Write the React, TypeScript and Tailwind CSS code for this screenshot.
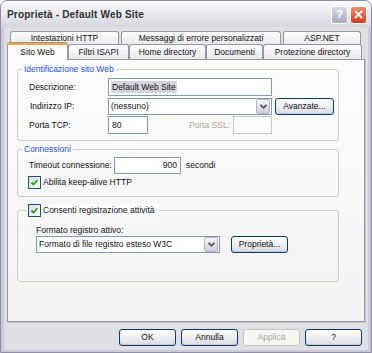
import React from "react";

const font = { fontFamily: "'Liberation Sans', Arial, sans-serif" };

function Tab({ label, w, h = "h-[15px]" }: { label: string; w: string; h?: string }) {
  return (
    <div
      className={`${w} ${h} shrink-0 flex items-center justify-center rounded-t-[3px] border border-b-0 border-[#919b9c] bg-gradient-to-b from-[#ffffff] to-[#e8e8ee] text-[8.5px] text-[#111]`}
    >
      {label}
    </div>
  );
}

function XpButton({ label, w = "w-[57px]", disabled = false }: { label: string; w?: string; disabled?: boolean }) {
  return (
    <div
      className={`${w} h-[17px] shrink-0 flex items-center justify-center rounded-[3px] border text-[8.5px] ${
        disabled
          ? "border-[#c9c7ba] bg-[#f5f5f3] text-[#aca899]"
          : "border-[#003c74] bg-gradient-to-b from-[#ffffff] to-[#dcdce4] text-[#111] shadow-[inset_0_-1px_0_#c6c5d7]"
      }`}
    >
      {label}
    </div>
  );
}

function Checkbox() {
  return (
    <div className="w-[13px] h-[13px] shrink-0 border border-[#1c5180] bg-gradient-to-br from-[#dcdcd7] to-[#ffffff] flex items-center justify-center">
      <svg width="9" height="9" viewBox="0 0 9 9">
        <path d="M1.5 4.5 L3.5 6.5 L7.5 2" fill="none" stroke="#21a121" strokeWidth="1.8" />
      </svg>
    </div>
  );
}

function Select({ value, w }: { value: string; w: string }) {
  return (
    <div className={`${w} h-[17px] shrink-0 flex items-center border border-[#7f9db9] bg-white`}>
      <span className="flex-1 pl-[2px] text-[8.5px] text-[#111] whitespace-nowrap">{value}</span>
      <div className="w-[14px] h-[15px] mr-[1px] flex items-center justify-center rounded-[2px] border border-[#b4b4c4] bg-gradient-to-b from-[#f4f4f8] to-[#cfcfdb]">
        <svg width="7" height="5" viewBox="0 0 7 5">
          <path d="M0.5 0.8 L3.5 3.8 L6.5 0.8" fill="none" stroke="#4d4d60" strokeWidth="1.6" />
        </svg>
      </div>
    </div>
  );
}

export default function App() {
  return (
    <div className="w-[372px] h-[353px] bg-white" style={font}>
      <div className="w-[372px] h-[353px] flex flex-col rounded-t-[7px] border border-[#8e8ea4] bg-[#c9c9d7]">
        {/* Title bar */}
        <div className="h-[26px] shrink-0 flex items-center rounded-t-[6px] bg-gradient-to-b from-[#fbfbfd] via-[#e8e8ee] to-[#d6d6e0] pl-[6px] pr-[4px]">
          <span className="flex-1 text-[10px] font-bold text-[#303030] tracking-[0.2px]">
            Proprietà - Default Web Site
          </span>
          <div className="flex gap-[2px] mt-[1px]">
            <div className="w-[17px] h-[18px] flex items-center justify-center rounded-[3px] border border-white bg-gradient-to-b from-[#dadae6] to-[#a9a9c0] text-[11px] font-bold text-white">
              ?
            </div>
            <div className="w-[17px] h-[18px] flex items-center justify-center rounded-[3px] border border-white bg-gradient-to-b from-[#f08a6c] to-[#d2391b]">
              <svg width="9" height="9" viewBox="0 0 9 9">
                <path d="M1 1 L8 8 M8 1 L1 8" stroke="white" strokeWidth="1.8" />
              </svg>
            </div>
          </div>
        </div>

        {/* Body */}
        <div className="flex-1 mx-[3px] mb-[3px] bg-[#e0dfe3] flex flex-col px-[3px] pt-[4px] pb-[4px]">
          {/* Tabs */}
          <div className="flex flex-col">
            <div className="flex gap-[2px] ml-[3px]">
              <Tab label="Intestazioni HTTP" w="w-[109px]" h="h-[13px]" />
              <Tab label="Messaggi di errore personalizzati" w="w-[160px]" h="h-[13px]" />
              <Tab label="ASP.NET" w="w-[78px]" h="h-[13px]" />
            </div>
            <div className="flex">
              <div className="relative z-10 -mt-[2px] w-[61px] h-[18px] -mb-[1px] shrink-0 flex flex-col rounded-t-[3px] border border-b-0 border-[#919b9c] bg-[#fcfcfd] overflow-hidden">
                <div className="h-[2px] bg-[#f2a43a]" />
                <div className="flex-1 flex items-center justify-center text-[8.5px] text-[#111]">Sito Web</div>
              </div>
              <Tab label="Filtri ISAPI" w="w-[61px]" />
              <Tab label="Home directory" w="w-[77px]" />
              <Tab label="Documenti" w="w-[57px]" />
              <Tab label="Protezione directory" w="w-[99px]" />
            </div>
          </div>

          {/* Panel */}
          <div className="h-[263px] w-[358px] shrink-0 flex flex-col border border-[#919b9c] bg-gradient-to-b from-[#fcfcfd] to-[#f3f3f2] shadow-[1px_1px_0_#c5c5cf] text-[8.5px] text-[#111]">
            {/* Identificazione sito Web */}
            <div className="relative mt-[9px] ml-[9px] w-[322px] rounded-[3px] border border-[#d0d0bf] pt-[8px] pb-[6px] pl-[11px] flex flex-col gap-[1px]">
              <span className="absolute -top-[6px] left-[4px] px-[2px] bg-[#fcfcfd] text-[#1e4fd8] leading-[10px]">
                Identificazione sito Web
              </span>
              <div className="h-[18px] flex items-center">
                <span className="w-[79px] shrink-0">Descrizione:</span>
                <div className="w-[164px] h-[18px] flex items-center border border-[#7f9db9] bg-white pl-[2px]">
                  <span className="bg-[#d4d4dc] px-[1px]">Default Web Site</span>
                </div>
              </div>
              <div className="h-[18px] flex items-center">
                <span className="w-[79px] shrink-0 pl-[1px]">Indirizzo IP:</span>
                <Select value="(nessuno)" w="w-[164px]" />
                <div className="ml-[3px]">
                  <XpButton label="Avanzate..." w="w-[59px]" />
                </div>
              </div>
              <div className="h-[18px] flex items-center">
                <span className="w-[79px] shrink-0">Porta TCP:</span>
                <div className="w-[40px] h-[18px] flex items-center border border-[#7f9db9] bg-white pl-[3px]">80</div>
                <span className="w-[82px] shrink-0 text-right text-[#aca899]">Porta SSL:</span>
                <div className="ml-[3px] w-[39px] h-[18px] border border-[#c9c7ba] bg-[#fcfcfc]" />
              </div>
            </div>

            {/* Connessioni */}
            <div className="relative mt-[8px] ml-[9px] w-[322px] rounded-[3px] border border-[#d0d0bf] pt-[7px] pb-[7px] pl-[11px] flex flex-col gap-[2px]">
              <span className="absolute -top-[6px] left-[4px] px-[2px] bg-[#fcfcfd] text-[#1e4fd8] leading-[10px]">
                Connessioni
              </span>
              <div className="h-[17px] flex items-center">
                <span className="w-[85px] shrink-0">Timeout connessione:</span>
                <div className="w-[67px] h-[17px] flex items-center justify-end border border-[#7f9db9] bg-white pr-[3px]">900</div>
                <span className="ml-[5px]">secondi</span>
              </div>
              <div className="h-[13px] flex items-center -ml-[1px] gap-[2px]">
                <Checkbox />
                <span>Abilita keep-alive HTTP</span>
              </div>
            </div>

            {/* Registrazione */}
            <div className="relative mt-[13px] ml-[9px] w-[322px] h-[72px] rounded-[3px] border border-[#d0d0bf] pt-[14px] pl-[18px] flex flex-col">
              <div className="absolute -top-[7px] left-[9px] pl-[1px] pr-[4px] flex items-center gap-[2px] bg-[#fcfcfd]">
                <Checkbox />
                <span>Consenti registrazione attività</span>
              </div>
              <span className="h-[10px] leading-[10px]">Formato registro attivo:</span>
              <div className="mt-[1px] flex items-center">
                <Select value="Formato di file registro esteso W3C" w="w-[184px]" />
                <div className="ml-[11px] -mt-[1px]">
                  <XpButton label="Proprietà..." w="w-[57px]" />
                </div>
              </div>
            </div>
          </div>

          {/* Bottom buttons */}
          <div className="mt-[7px] flex justify-end gap-[5px] pr-[3px]">
            <XpButton label="OK" />
            <XpButton label="Annulla" />
            <XpButton label="Applica" disabled />
            <XpButton label="?" />
          </div>
        </div>
      </div>
    </div>
  );
}
